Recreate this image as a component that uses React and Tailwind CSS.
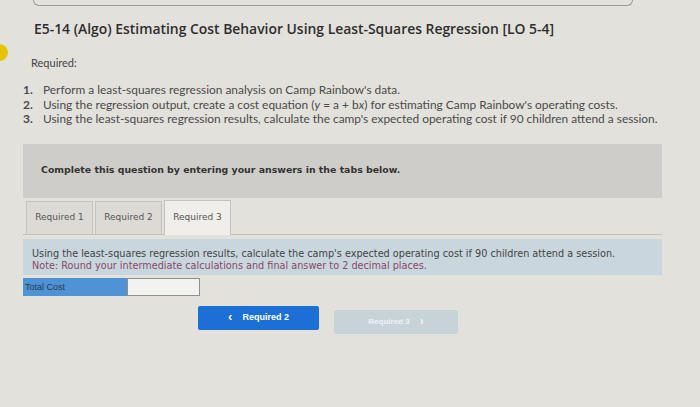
import React from 'react';

const Tab = ({ label, active }) => (
    <div
        className={`flex items-center justify-center w-[67px] border border-[#c4c2bd] border-b-0 text-[9px] text-[#555] ${active ? 'bg-[#efeeea] h-[35px] -mb-px' : 'bg-[#dcdad5] h-[33px]'}`}
    >
        {label}
    </div>
);

const App = () => {
    return (
        <div className="relative w-[700px] h-[407px] overflow-hidden bg-[#e3e1dc] font-['Lato',sans-serif]">
            {/* end of previous card */}
            <div className="ml-[33px] w-[600px] h-[6px] border border-t-0 border-[#9b9a96] rounded-b-[6px]" />

            <div className="absolute left-[-9px] top-[44px] w-[17px] h-[17px] rounded-full bg-[#e7c400]" />

            <h1 className="ml-[34px] mt-[14px] text-[13.9px] font-semibold text-[#2e2e2e] font-['Open_Sans',sans-serif] leading-[18px]">
                E5-14 (Algo) Estimating Cost Behavior Using Least-Squares Regression [LO 5-4]
            </h1>

            <p className="ml-[31px] mt-[18px] text-[11px] text-[#444] leading-[14px]">Required:</p>

            <ol className="ml-[23px] mt-[13px] text-[11.9px] text-[#4a4a4a] leading-[14.5px]">
                <li className="flex gap-[8px]"><span className="w-[12px] font-bold">1.</span><span>Perform a least-squares regression analysis on Camp Rainbow's data.</span></li>
                <li className="flex gap-[8px]"><span className="w-[12px] font-bold">2.</span><span>Using the regression output, create a cost equation (<i>y</i> = a + b<i>x</i>) for estimating Camp Rainbow's operating costs.</span></li>
                <li className="flex gap-[8px]"><span className="w-[12px] font-bold">3.</span><span>Using the least-squares regression results, calculate the camp's expected operating cost if 90 children attend a session.</span></li>
            </ol>

            <div className="ml-[23px] mt-[17px] w-[639px] font-['DejaVu_Sans',sans-serif]">
                <div className="h-[54px] bg-[#cfcdc9] pl-[18px] flex items-center">
                    <span className="text-[9.4px] font-bold text-[#333]">Complete this question by entering your answers in the tabs below.</span>
                </div>

                <div className="flex items-end gap-[2px] pl-[3px] mt-[2px] border-b border-[#c4c2bd]">
                    <Tab label="Required 1" />
                    <Tab label="Required 2" />
                    <Tab label="Required 3" active />
                </div>

                <div className="mt-[4px] bg-[#c9d6dd] px-[9px] pt-[9px] pb-[3px] text-[9.7px] leading-[12px]">
                    <p className="text-[#444]">Using the least-squares regression results, calculate the camp's expected operating cost if 90 children attend a session.</p>
                    <p className="text-[#8a4868]">Note: Round your intermediate calculations and final answer to 2 decimal places.</p>
                </div>

                <div className="mt-[3px] flex h-[18px]">
                    <div className="w-[104px] bg-[#4f92d6] pl-[2px] text-[9px] leading-[18px] text-[#2a3a4c] font-['Liberation_Sans',sans-serif]">Total Cost</div>
                    <div className="w-[73px] bg-[#f2f2f0] border border-[#8f8f8f]" />
                </div>

                <div className="flex gap-[15px] ml-[175px] mt-[10px] items-start">
                    <button className="w-[121px] h-[24px] bg-[#1c6fd5] rounded-[2px] flex items-center justify-center gap-[10px] text-white text-[9px] font-bold font-['Liberation_Sans',sans-serif]">
                        <span className="text-[13px] leading-none -mt-[2px]">‹</span>Required 2
                    </button>
                    <button className="mt-[4px] w-[124px] h-[24px] bg-[#c8d2d9] rounded-[2px] flex items-center justify-center gap-[10px] text-[#eef2f5] text-[8px] font-bold font-['Liberation_Sans',sans-serif]">
                        Required 3<span className="text-[12px] leading-none -mt-[2px]">›</span>
                    </button>
                </div>
            </div>
        </div>
    );
};

export default App;
